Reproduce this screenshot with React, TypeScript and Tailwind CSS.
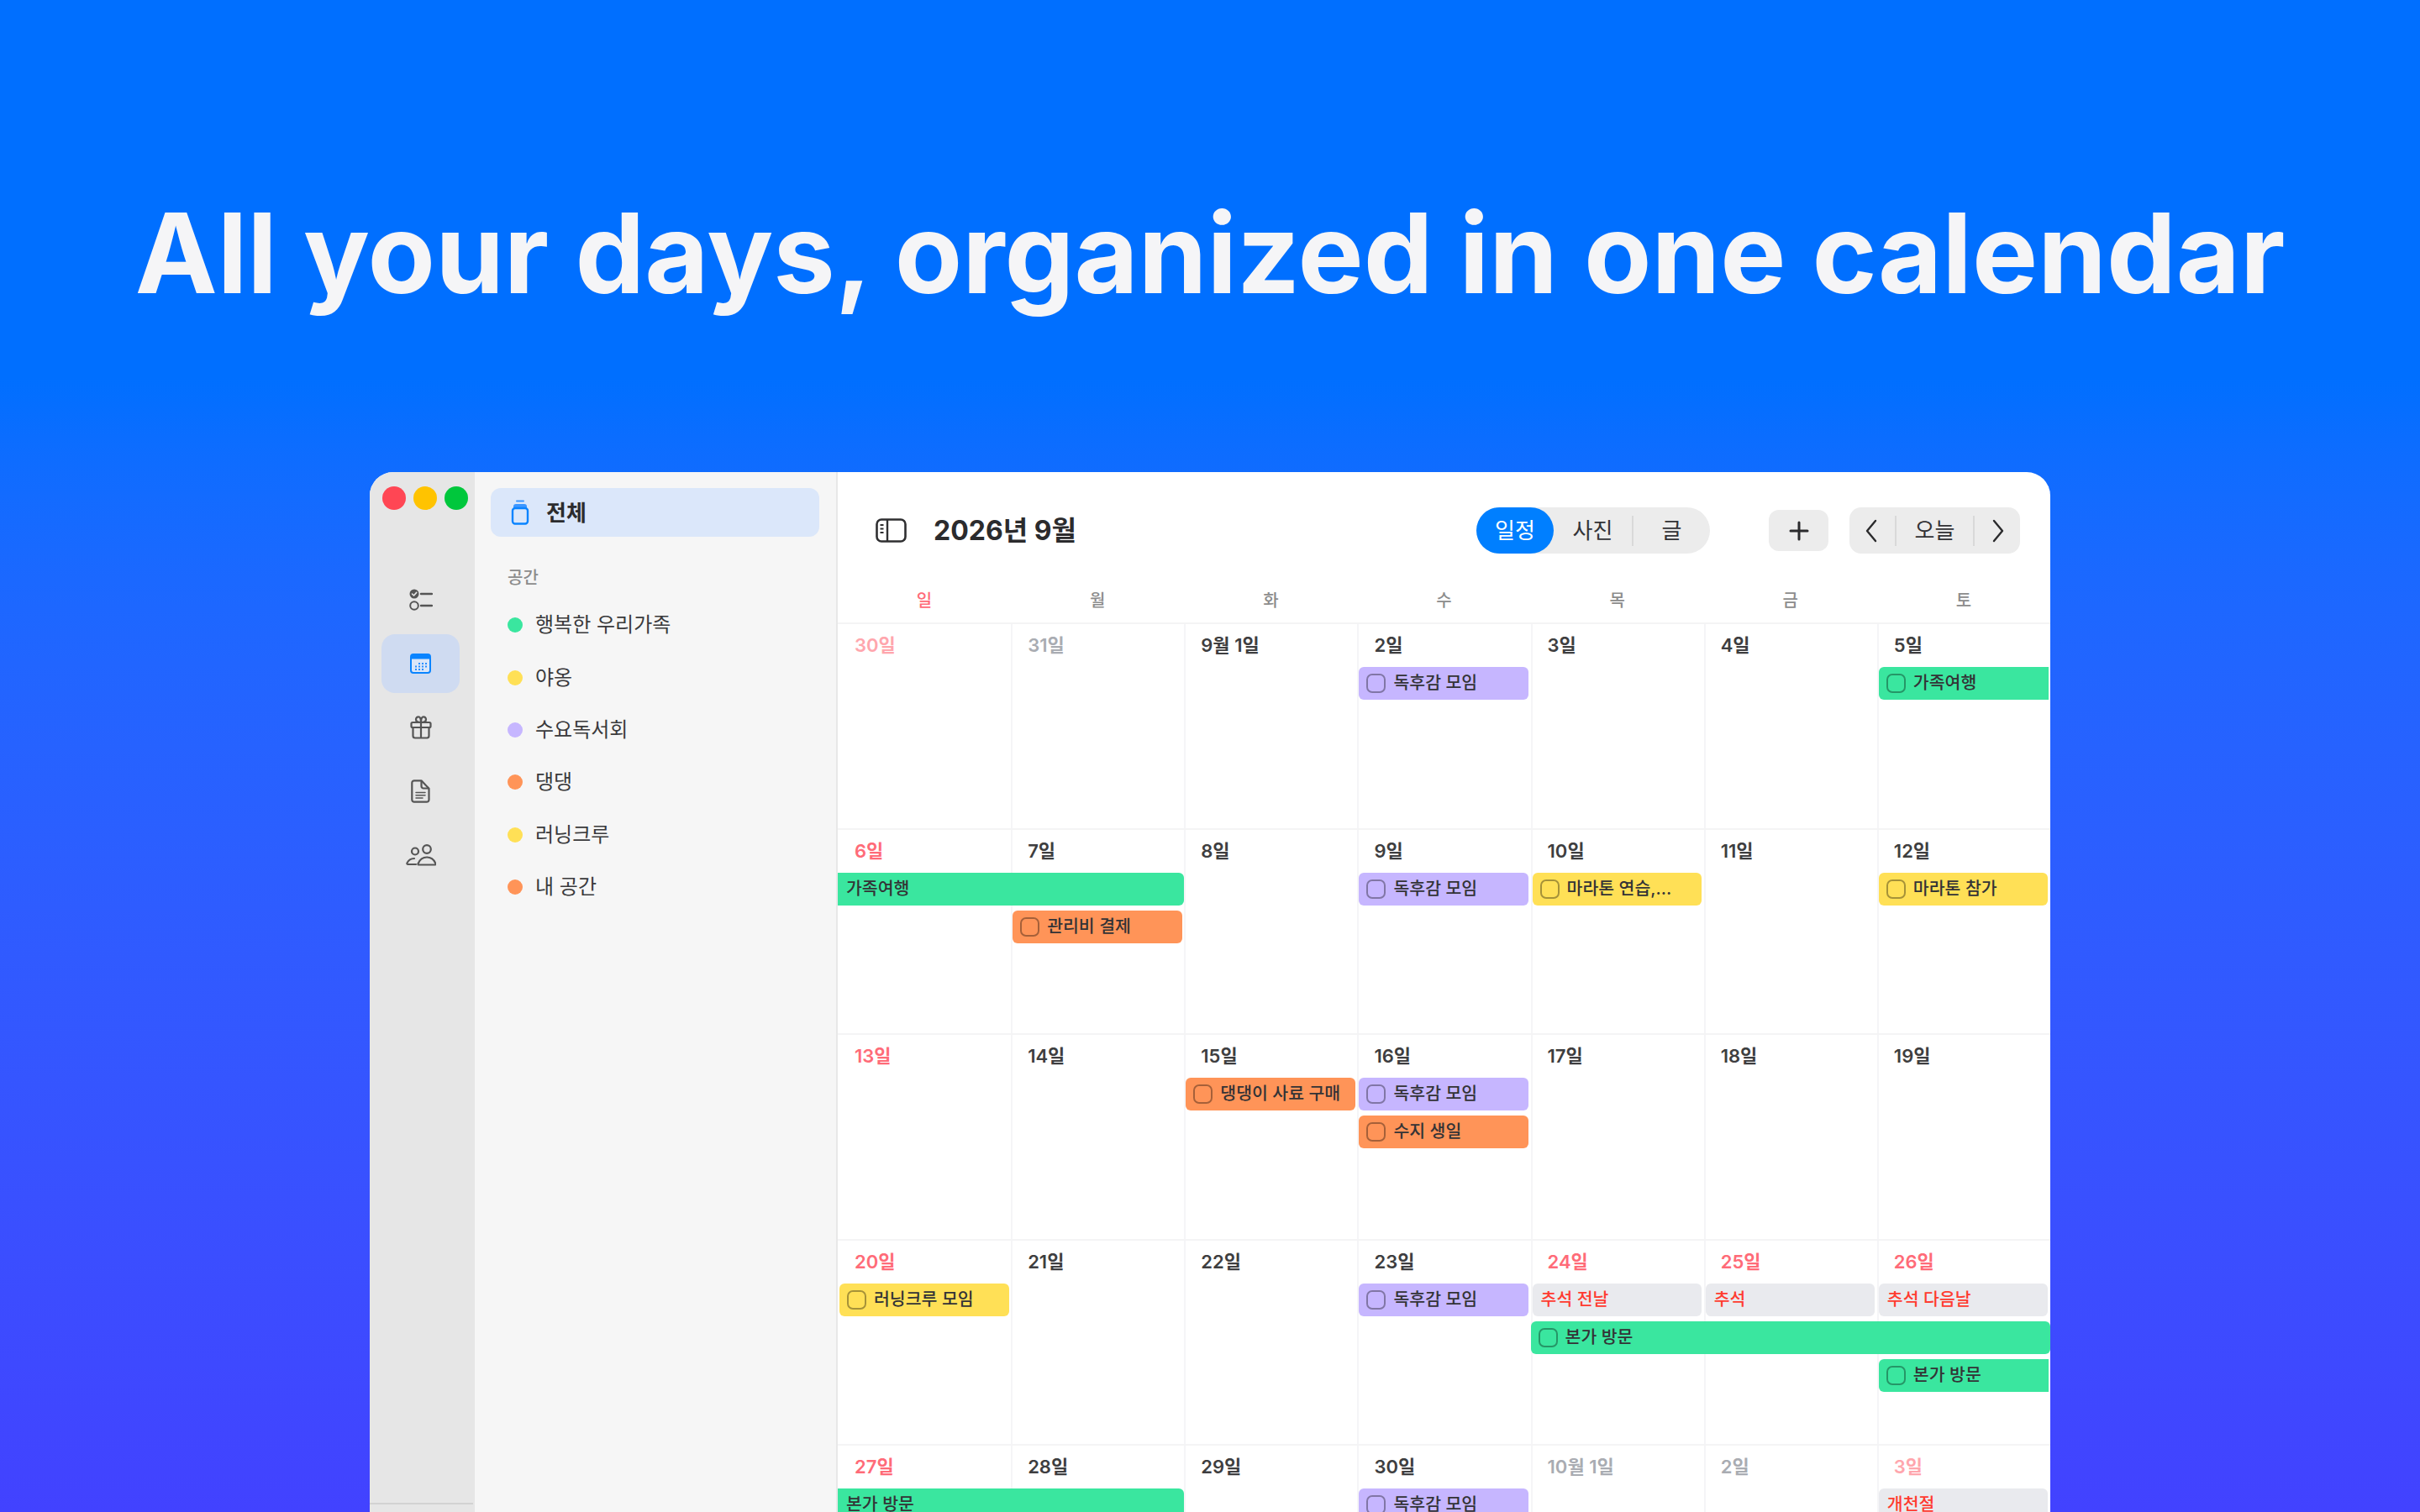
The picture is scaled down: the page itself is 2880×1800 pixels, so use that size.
import React from "react";

const font = { fontFamily: '"Inter","Noto Sans CJK KR","Noto Sans",sans-serif' };

const colStart = ["", "col-start-1", "col-start-2", "col-start-3", "col-start-4", "col-start-5", "col-start-6", "col-start-7"];

type Ev = {
  t: string;
  c: number;
  r: string;
  span?: string;
  color: string;
  box?: boolean;
  shape?: string;
  holiday?: boolean;
};
type Day = { d: string; tone?: "sun" | "fadedSun" | "faded" };
type Week = { days: Day[]; events: Ev[] };

const GREEN = "bg-[#3ae69f]";
const PURPLE = "bg-[#c6b6ff]";
const ORANGE = "bg-[#ff9458]";
const YELLOW = "bg-[#ffe056]";
const GREY = "bg-[#e9eaee]";

const inset = "ml-[2px] mr-[2.500px] rounded-[6px]";

const weeks: Week[] = [
  {
    days: [{ d: "30일", tone: "fadedSun" }, { d: "31일", tone: "faded" }, { d: "9월 1일" }, { d: "2일" }, { d: "3일" }, { d: "4일" }, { d: "5일" }],
    events: [
      { t: "독후감 모임", c: 4, r: "row-start-2", color: PURPLE, box: true, shape: inset },
      { t: "가족여행", c: 7, r: "row-start-2", color: GREEN, box: true, shape: "ml-[2px] mr-[2px] rounded-l-[6px]" },
    ],
  },
  {
    days: [{ d: "6일", tone: "sun" }, { d: "7일" }, { d: "8일" }, { d: "9일" }, { d: "10일" }, { d: "11일" }, { d: "12일" }],
    events: [
      { t: "가족여행", c: 1, r: "row-start-2", span: "col-span-2", color: GREEN, shape: "rounded-r-[6px]" },
      { t: "관리비 결제", c: 2, r: "row-start-3", color: ORANGE, box: true, shape: inset },
      { t: "독후감 모임", c: 4, r: "row-start-2", color: PURPLE, box: true, shape: inset },
      { t: "마라톤 연습,...", c: 5, r: "row-start-2", color: YELLOW, box: true, shape: inset },
      { t: "마라톤 참가", c: 7, r: "row-start-2", color: YELLOW, box: true, shape: inset },
    ],
  },
  {
    days: [{ d: "13일", tone: "sun" }, { d: "14일" }, { d: "15일" }, { d: "16일" }, { d: "17일" }, { d: "18일" }, { d: "19일" }],
    events: [
      { t: "댕댕이 사료 구매", c: 3, r: "row-start-2", color: ORANGE, box: true, shape: inset },
      { t: "독후감 모임", c: 4, r: "row-start-2", color: PURPLE, box: true, shape: inset },
      { t: "수지 생일", c: 4, r: "row-start-3", color: ORANGE, box: true, shape: inset },
    ],
  },
  {
    days: [{ d: "20일", tone: "sun" }, { d: "21일" }, { d: "22일" }, { d: "23일" }, { d: "24일", tone: "sun" }, { d: "25일", tone: "sun" }, { d: "26일", tone: "sun" }],
    events: [
      { t: "러닝크루 모임", c: 1, r: "row-start-2", color: YELLOW, box: true, shape: inset },
      { t: "독후감 모임", c: 4, r: "row-start-2", color: PURPLE, box: true, shape: inset },
      { t: "추석 전날", c: 5, r: "row-start-2", color: GREY, holiday: true, shape: inset },
      { t: "추석", c: 6, r: "row-start-2", color: GREY, holiday: true, shape: inset },
      { t: "추석 다음날", c: 7, r: "row-start-2", color: GREY, holiday: true, shape: inset },
      { t: "본가 방문", c: 5, r: "row-start-3", span: "col-span-3", color: GREEN, box: true, shape: "rounded-[6px]" },
      { t: "본가 방문", c: 7, r: "row-start-4", color: GREEN, box: true, shape: "ml-[2px] mr-[2px] rounded-l-[6px]" },
    ],
  },
  {
    days: [{ d: "27일", tone: "sun" }, { d: "28일" }, { d: "29일" }, { d: "30일" }, { d: "10월 1일", tone: "faded" }, { d: "2일", tone: "faded" }, { d: "3일", tone: "fadedSun" }],
    events: [
      { t: "본가 방문", c: 1, r: "row-start-2", span: "col-span-2", color: GREEN, shape: "rounded-r-[6px]" },
      { t: "독후감 모임", c: 4, r: "row-start-2", color: PURPLE, box: true, shape: inset },
      { t: "개천절", c: 7, r: "row-start-2", color: GREY, holiday: true, shape: inset },
    ],
  },
];

const toneClass = {
  sun: "text-[#ff6b78]",
  fadedSun: "text-[#ffa6ad]",
  faded: "text-[#a9acb2]",
  none: "text-[#3e3e40]",
};

function Pill({ e }: { e: Ev }) {
  return (
    <div
      className={`${colStart[e.c]} ${e.r} ${e.span ?? "col-span-1"} ${e.color} ${e.shape} h-[39px] flex items-center ${e.box ? "pl-[9px]" : "pl-[10px]"} text-[20.500px] font-medium whitespace-nowrap overflow-hidden ${e.holiday ? "text-[#ff3b30]" : "text-[#333336]"}`}
    >
      {e.box && <span className="w-[23px] h-[23px] rounded-[7px] border-2 border-black/35 mr-[9px] shrink-0" />}
      <span>{e.t}</span>
    </div>
  );
}

function WeekRow({ w }: { w: Week }) {
  return (
    <div className="grid grid-cols-7 grid-rows-[51px_45px_45px_45px_1fr] h-[244.5px] shrink-0 border-t-2 border-[#f4f4f5]">
      {w.days.map((day, i) => (
        <div
          key={i}
          className={`${colStart[i + 1]} row-start-1 row-end-6 pt-[10px] ${i > 0 ? "pl-[18px] border-l-2 border-[#f5f5f7]" : "pl-[20px]"}`}
        >
          <span className={`block text-[22px] leading-[30px] font-semibold ${toneClass[day.tone ?? "none"]}`}>{day.d}</span>
        </div>
      ))}
      {w.events.map((e, i) => (
        <Pill key={i} e={e} />
      ))}
    </div>
  );
}

function ChecklistIcon() {
  return (
    <svg width="28" height="26" viewBox="0 0 28 26" fill="none">
      <circle cx="6" cy="6" r="5.5" fill="#555" />
      <path d="M3.5 6l2 2 3.2-3.6" stroke="#e6e6e6" strokeWidth="1.6" strokeLinecap="round" strokeLinejoin="round" />
      <circle cx="6" cy="20" r="4.8" stroke="#555" strokeWidth="2" />
      <path d="M14 6h13M14 20h13" stroke="#555" strokeWidth="2.4" strokeLinecap="round" />
    </svg>
  );
}

function CalendarIcon() {
  const dots: [number, number][] = [];
  [11, 14.5, 18].forEach((y, r) => {
    [6, 10, 14, 18].forEach((x, c) => {
      if (!(r === 0 && c === 0) && !(r === 2 && c === 3)) dots.push([x, y]);
    });
  });
  return (
    <svg width="25" height="24" viewBox="0 0 25 24" fill="none">
      <rect x="1" y="1" width="23" height="22" rx="3" fill="#dbe6f8" stroke="#0a84ff" strokeWidth="2" />
      <path d="M1 4a3 3 0 0 1 3-3h17a3 3 0 0 1 3 3v2.500H1z" fill="#0a84ff" />
      {dots.map(([x, y], i) => (
        <rect key={i} x={x} y={y} width="2" height="2" fill="#2b8fff" />
      ))}
    </svg>
  );
}

function GiftIcon() {
  return (
    <svg width="26" height="28" viewBox="0 0 26 28" fill="none" stroke="#555" strokeWidth="2.2" strokeLinejoin="round">
      <path d="M13 8C10 8 7 7.5 7 4.5 7 2.5 8.500 1.300 10 1.300c2 0 3 2.500 3 6.700zM13 8c3 0 6-.5 6-3.500 0-2-1.500-3.200-3-3.200-2 0-3 2.500-3 6.700z" />
      <rect x="1.500" y="8" width="23" height="6" rx="1.500" />
      <path d="M3.500 14v10a2.500 2.500 0 0 0 2.500 2.500h14a2.500 2.500 0 0 0 2.500-2.500V14M13 8v18.500" />
    </svg>
  );
}

function DocIcon() {
  return (
    <svg width="23" height="28" viewBox="0 0 23 28" fill="none" stroke="#555" strokeWidth="2.2" strokeLinejoin="round">
      <path d="M4 1.300h8.500l9 9.500v13.200a2.700 2.700 0 0 1-2.700 2.700H4A2.700 2.700 0 0 1 1.300 24V4A2.700 2.700 0 0 1 4 1.300z" />
      <path d="M12.500 1.300V8a2.500 2.500 0 0 0 2.500 2.500h6.500" />
      <path d="M6 15.500h11M6 18.800h11M6 22h8" strokeWidth="1.500" strokeLinecap="round" />
    </svg>
  );
}

function PeopleIcon() {
  return (
    <svg width="36" height="26" viewBox="0 0 36 26" fill="none" stroke="#555" strokeWidth="2.200" strokeLinecap="round" strokeLinejoin="round">
      <circle cx="11" cy="8.500" r="4" />
      <circle cx="25" cy="6" r="4.800" />
      <path d="M12 24H2.500c-1 0-1.400-.7-1-1.600C3 19 6 17 10 17" />
      <path d="M15 24.500h19.500c1 0 1.200-.9.800-1.700C33.500 18.500 29.500 15.500 25 15.500s-8.500 3-10.300 7.300c-.4.800-.2 1.700.3 1.700z" />
    </svg>
  );
}

function BottleIcon() {
  return (
    <svg width="22" height="30" viewBox="0 0 22 30" fill="none">
      <path d="M7 1.500h8" stroke="#3d97ff" strokeWidth="2" strokeLinecap="round" />
      <path d="M3 8a3 3 0 0 1 3-3h10a3 3 0 0 1 3 3v1.500H3z" fill="#3d97ff" />
      <rect x="2" y="10" width="18" height="18.500" rx="3" stroke="#0a84ff" strokeWidth="2.400" />
    </svg>
  );
}

function SideToggleIcon() {
  return (
    <svg width="37" height="29" viewBox="0 0 37 29" fill="none" stroke="#2f2f31">
      <rect x="1.500" y="1.500" width="34" height="26" rx="5.500" strokeWidth="2.600" />
      <path d="M14 1.500v26" strokeWidth="2.400" />
      <path d="M5.500 8h4M5.500 12.500h4M5.500 17h4" strokeWidth="2.200" />
    </svg>
  );
}

const Divider = () => <span className="w-[2px] h-[36px] bg-[#d9d9d9] shrink-0" />;

const spaces = [
  ["행복한 우리가족", "bg-[#3ae69f]"],
  ["야옹", "bg-[#ffe056]"],
  ["수요독서회", "bg-[#c6b6ff]"],
  ["댕댕", "bg-[#ff9458]"],
  ["러닝크루", "bg-[#ffe056]"],
  ["내 공간", "bg-[#ff9458]"],
];

const wd = ["일", "월", "화", "수", "목", "금", "토"];

export default function App() {
  return (
    <div style={font} className="w-full h-[1800px] overflow-hidden bg-gradient-to-b from-[#006fff] from-[25%] to-[#4242ff]">
      <div className="h-[562px] flex justify-center items-start">
        <h1 className="mt-[214px] text-[131.300px] leading-[176px] font-bold text-[#f5f5f7] whitespace-nowrap">
          All your days, organized in one calendar
        </h1>
      </div>

      <div className="mx-[440px] w-[2000px] h-[1238px] rounded-t-[28px] overflow-hidden flex bg-white">
        {/* Rail */}
        <div className="w-[125px] shrink-0 bg-[#e6e6e6] flex flex-col">
          <div className="flex gap-[9px] pl-[15px] pt-[17px]">
            <span className="w-[28px] h-[28px] rounded-full bg-[#ff4654]" />
            <span className="w-[28px] h-[28px] rounded-full bg-[#ffc300]" />
            <span className="w-[28px] h-[28px] rounded-full bg-[#00c73c]" />
          </div>
          <div className="flex flex-col items-center mt-[69px] pr-[4px]">
            <div className="h-[76px] flex items-center justify-center"><ChecklistIcon /></div>
            <div className="w-[93px] h-[70px] my-[3px] rounded-[16px] bg-[#cfdbf1] flex items-center justify-center"><CalendarIcon /></div>
            <div className="h-[76px] flex items-center justify-center"><GiftIcon /></div>
            <div className="h-[76px] flex items-center justify-center"><DocIcon /></div>
            <div className="h-[76px] flex items-center justify-center"><PeopleIcon /></div>
          </div>
          <div className="mt-auto mb-[9px] mr-[2px] h-[2px] bg-[#d2d2d2]" />
        </div>

        {/* Sidebar */}
        <div className="w-[432px] shrink-0 bg-[#f6f6f6] border-r-2 border-[#e8e8e8] pt-[19px] pl-[19px]">
          <div className="w-[391px] h-[58px] rounded-[12px] bg-[#dbe7fa] flex items-center pl-[24px]">
            <BottleIcon />
            <span className="ml-[20px] text-[26px] font-semibold text-[#2c2c2e]">전체</span>
          </div>
          <div className="pl-[20px]">
            <div className="mt-[35px] text-[20px] leading-[28px] font-medium text-[#8c8c8c]">공간</div>
            <div className="mt-[11px] flex flex-col">
              {spaces.map(([n, c]) => (
                <div key={n} className="h-[62.4px] flex items-center">
                  <span className={`w-[18px] h-[18px] rounded-full ${c}`} />
                  <span className="ml-[15px] text-[24px] text-[#3a3a3c]">{n}</span>
                </div>
              ))}
            </div>
          </div>
        </div>

        {/* Main */}
        <div className="flex-1 min-w-0 flex flex-col">
          <div className="h-[55px] mt-[42px] flex items-center pl-[45px] shrink-0">
            <SideToggleIcon />
            <span className="ml-[32px] text-[32px] font-bold text-[#2b2b2d]">2026년 9월</span>
            <div className="ml-auto flex items-center">
              <div className="w-[278px] h-[55px] rounded-full bg-[#ececec] flex items-center text-[26px] text-[#333336]">
                <span className="w-[92px] h-[55px] rounded-full bg-[#007fff] text-white flex items-center justify-center">일정</span>
                <span className="w-[93px] flex items-center justify-center">사진</span>
                <Divider />
                <span className="flex-1 flex items-center justify-center">글</span>
              </div>
              <div className="ml-[70px] w-[71px] h-[49px] rounded-[12px] bg-[#ececec] flex items-center justify-center">
                <svg width="24" height="24" viewBox="0 0 24 24" fill="none" stroke="#2b2b2d" strokeWidth="3" strokeLinecap="round"><path d="M12 2v20M2 12h20" /></svg>
              </div>
              <div className="ml-[25px] w-[203px] h-[55px] rounded-[14px] bg-[#ececec] flex items-center text-[26px] text-[#333336]">
                <span className="w-[54px] pr-[2px] flex items-center justify-center">
                  <svg width="16" height="28" viewBox="0 0 16 28" fill="none" stroke="#2b2b2d" strokeWidth="2.400" strokeLinecap="round" strokeLinejoin="round"><path d="M13 2 3 14l10 12" /></svg>
                </span>
                <Divider />
                <span className="flex-1 flex items-center justify-center">오늘</span>
                <Divider />
                <span className="w-[54px] pl-[2px] flex items-center justify-center">
                  <svg width="16" height="28" viewBox="0 0 16 28" fill="none" stroke="#2b2b2d" strokeWidth="2.400" strokeLinecap="round" strokeLinejoin="round"><path d="m3 2 10 12L3 26" /></svg>
                </span>
              </div>
              <span className="w-[36px]" />
            </div>
          </div>
          <div className="grid grid-cols-7 mt-[31px] mb-[1px] h-[50px] shrink-0 items-center text-center text-[20px] font-medium text-[#8c8c8c]">
            {wd.map((w, i) => (
              <span key={w} className={i === 0 ? "text-[#ff6b78]" : ""}>{w}</span>
            ))}
          </div>
          {weeks.map((w, i) => (
            <WeekRow key={i} w={w} />
          ))}
        </div>
      </div>
    </div>
  );
}
